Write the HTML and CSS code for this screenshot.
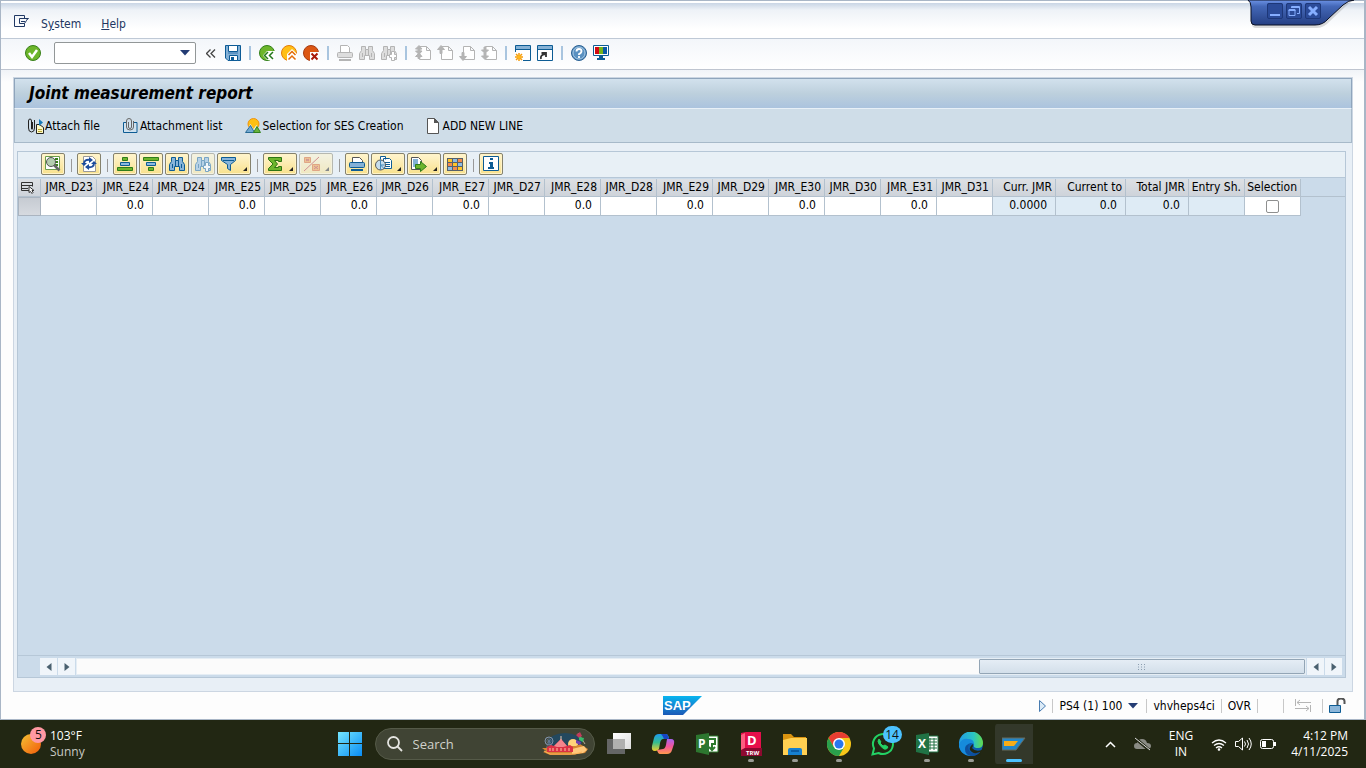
FILE: index.html
```html
<!DOCTYPE html>
<html lang="en">
	<head>
		<meta charset="UTF-8">
		<title>Joint measurement report</title>
		<link rel="stylesheet" href="styles.css">
	</head>
	<body>
		<!-- shared icon shapes -->
		<svg class="sprite" aria-hidden="true">
			<symbol id="i-binoc" viewBox="0 0 16 16"><path d="M2.500 1.500h4v3h3v-3h4v4l2 3v6h-5v-4h-5v4h-5v-6l2-3zM6.500 4.500v6M9.500 4.500v6M3.500 8v4M12.500 8v4"/></symbol>
			<symbol id="i-page" viewBox="0 0 16 16"><path d="M4.500 1.500h7l4 4v9h-11zM11.500 1.500v4h4"/></symbol>
			<symbol id="i-win" viewBox="0 0 16 16"><path d="M.5.5h15v15H.5z" fill="#fff" stroke="#0d5c94"/><path d="M1 1h14v3H1z" fill="#86b2d6"/><path d="M0 4h16v1H0z" fill="#0d5c94"/></symbol>
			<symbol id="i-sigma" viewBox="0 0 16 16"><path d="M1.500 1.500h13v4h-3v-1h-4l3 3.500-3 3.500h4v-1h3v4h-13v-2L6 8 1.500 3.500z" fill="#6db52d" stroke="#2d7513"/></symbol>
		</svg>

		<div class="sap">
			<div class="menubar">
				<button class="plain menu-icon" aria-label="Menu"><svg width="15" height="12" viewBox="0 0 15 12" fill="none" stroke="#203864"><path d="M10.500 3.500v-3H.5v11h10v-3M14.500 3.500h-9v5h5l2-3M7 6.500h4M12 5.500l2.500-2"/></svg></button>
				<a href="#">S<u>y</u>stem</a>
				<a href="#"><u>H</u>elp</a>
			</div>

			<div class="handle">
				<svg class="handle-bg" width="112" height="32" viewBox="0 0 112 32">
					<defs><linearGradient id="hg" x2="0" y2="1"><stop stop-color="#6d93e6"/><stop offset=".25" stop-color="#4468b8"/><stop offset="1" stop-color="#253f83"/></linearGradient></defs>
					<path d="M2 0q4 3 4 8v16q0 4 4 4h61q7 0 13-7l16-15q5-5 10-6z" fill="#999" opacity=".35"/>
					<path d="M2 0q3 2 3 7v14q0 4 4 4h60q8 0 13-6l15-14q6-5 11-5z" fill="url(#hg)" stroke="#0a1024"/>
				</svg>
				<div class="handle-buttons">
					<button aria-label="Minimize"><svg width="16" height="16"><path d="M3 11h10v2H3z" fill="#86aeff"/></svg></button>
					<button aria-label="Restore"><svg width="16" height="16" fill="none" stroke="#86aeff"><path d="M3 6.500h6v6H3zM2.500 7.500h7M5.500 5V3.500h8v7H11"/><path d="M6 4h7" stroke-width="2"/></svg></button>
					<button aria-label="Close"><svg width="16" height="16" stroke="#86aeff" stroke-width="3"><path d="M4 4l8 8M12 4l-8 8"/></svg></button>
				</div>
			</div>

			<div class="toolbar">
				<button class="tool" aria-label="Enter"><svg width="16" height="16"><circle cx="8" cy="8" r="7.500" fill="#6cb52a" stroke="#388019"/><path d="M4 8l3 4 5-7" fill="none" stroke="#fff" stroke-width="2.500"/></svg></button>
				<div class="command">
					<input type="text" aria-label="Command">
					<button class="plain" aria-label="Command history"><svg width="10" height="6"><path d="M0 0h10L5 5.500z" fill="#233c74"/></svg></button>
				</div>
				<button class="tool" aria-label="Collapse"><svg width="10" height="9" fill="none" stroke="#444" stroke-width="1.300"><path d="M4.500.5l-4 4 4 4M9 .5l-4 4 4 4"/></svg></button>
				<button class="tool" aria-label="Save"><svg width="16" height="16"><path d="M.5.500h15v15H3L.5 13z" fill="#84b1d6" stroke="#0c5b96"/><path d="M3.500.500h9v6h-9zM4.500 10.500h8v5h-8z" fill="#fff" stroke="#0c5b96"/><path d="M3 7h10v2H3z" fill="#5d94c3"/><path d="M6 12h3v3H6z" fill="#0c5b96"/></svg></button>
				<i class="sep"></i>
				<button class="tool" aria-label="Back"><svg width="16" height="16" viewBox="0 0 16 16"><circle cx="8" cy="8" r="7.500" fill="#6db52b" stroke="#328019"/><path d="M4 10.500L8 6h8v9H8z" fill="#fff"/><path d="M9 7l-3.500 3.500L9 14M14 7l-3.500 3.500L14 14" fill="none" stroke="#26771c" stroke-width="1.500"/></svg></button>
				<button class="tool" aria-label="Exit"><svg width="16" height="16" viewBox="0 0 16 16"><circle cx="8" cy="8" r="7.500" fill="#ffbf16" stroke="#e57b08"/><path d="M6 9l5-5 5 5v7H6z" fill="#fff"/><path d="M7.500 10L11 6.500l3.500 3.500M7.500 14.500L11 11l3.500 3.500" fill="none" stroke="#e36b09" stroke-width="1.500"/></svg></button>
				<button class="tool" aria-label="Cancel"><svg width="16" height="16" viewBox="0 0 16 16"><circle cx="8" cy="8" r="7.500" fill="#dc5713" stroke="#a63b12"/><path d="M7 7h9v9H7z" fill="#fff"/><path d="M8.500 8.500l6 6M14.500 8.500l-6 6" stroke="#a91908" stroke-width="2"/></svg></button>
				<i class="sep"></i>
				<button class="tool" disabled aria-label="Print"><svg width="16" height="16" fill="#ddd" stroke="#b4b4b4"><path d="M3.500 7.500v-7h7l2 2v5" fill="#fff"/><rect x=".5" y="7.500" width="15" height="5" rx="1"/><path d="M2 15h12" stroke-width="2"/></svg></button>
				<button class="tool" disabled aria-label="Find"><svg width="16" height="16" fill="#ddd" stroke="#b4b4b4"><use href="#i-binoc"/></svg></button>
				<button class="tool" disabled aria-label="Find next"><svg width="16" height="16" fill="#ddd" stroke="#b4b4b4"><use href="#i-binoc"/><path d="M10.500 6.500h3v3h2v3h-2v3h-3v-3h-2v-3h2z" fill="#fff"/></svg></button>
				<i class="sep"></i>
				<button class="tool" disabled aria-label="First page"><svg width="16" height="16" fill="#fff" stroke="#b4b4b4"><use href="#i-page"/><path d="M4 .5l3 3.500H5v2h2L4 9.500.500 6H3V4H.500zM4 8l3 3.500H5v2H3v-2H.500z" fill="#b4b4b4"/></svg></button>
				<button class="tool" disabled aria-label="Previous page"><svg width="16" height="16" fill="#fff" stroke="#b4b4b4"><use href="#i-page"/><path d="M4 .5l3.500 4H5v4H3v-4H.500z" fill="#b4b4b4"/></svg></button>
				<button class="tool" disabled aria-label="Next page"><svg width="16" height="16" fill="#fff" stroke="#b4b4b4"><use href="#i-page"/><path d="M4 15.500l3.500-4H5v-4H3v4H.500z" fill="#b4b4b4"/></svg></button>
				<button class="tool" disabled aria-label="Last page"><svg width="16" height="16" fill="#fff" stroke="#b4b4b4"><use href="#i-page"/><path d="M3 2h2v3h2.500L4 8.500.500 5H3zM3 8h2v3h2.500L4 14.500.500 11H3z" fill="#b4b4b4"/></svg></button>
				<i class="sep"></i>
				<button class="tool" aria-label="New session"><svg width="16" height="16"><use href="#i-win"/><path d="M0 7h8v9H0z" fill="#fff"/><path d="M4 8v8M0 12h8M1 9l6 6M7 9l-6 6" stroke="#f59a0c" stroke-width="1.500"/><circle cx="4" cy="12" r="2" fill="#ffb81c"/></svg></button>
				<button class="tool" aria-label="Create shortcut"><svg width="16" height="16"><use href="#i-win"/><path d="M4 14q-1-4 4-5M4.500 8H9v4" fill="none" stroke="#333" stroke-width="1.800"/></svg></button>
				<i class="sep"></i>
				<button class="tool" aria-label="Help"><svg width="16" height="16"><circle cx="8" cy="8" r="7.500" fill="#5a91c1" stroke="#2b6193"/><circle cx="8" cy="8" r="6" fill="none" stroke="#a7c8e3"/><path d="M5.500 6.500q0-2.500 2.500-2.500t2.500 2-2.500 3v1M8 11v2" fill="none" stroke="#fff" stroke-width="1.800"/></svg></button>
				<button class="tool" aria-label="Customize layout"><svg width="16" height="16"><path d="M.5.500h15v10H.500z" fill="#fff" stroke="#0d5c94"/><path d="M2 2h4v7H2z" fill="#d20a11"/><path d="M6 2h4v7H6z" fill="#76b51b"/><path d="M10 2h4v7h-4z" fill="#0b5aa5"/><path d="M6 11h4v2h2v2H4v-2h2z" fill="#0d5c94"/></svg></button>
			</div>

			<div class="content">
				<div class="panel">
					<h1>Joint measurement report</h1>
					<div class="actions">
						<button class="plain"><svg width="16" height="16" fill="none" stroke="#222"><path d="M4.500 4v6q0 2-1 1V3q0-2-1.500-2T.500 3v7q0 4 3 4t3-4V2"/><path d="M8.500 6.500h3l4 3v6h-7z" fill="#fff9c4"/><path d="M10 13.500h4M10 11.500h4" stroke="#b5a433"/><path d="M11 1l4 3.500-4 3.500z" fill="#167ab8" stroke="none"/></svg><span>Attach file</span></button>
						<button class="plain"><svg width="16" height="16" viewBox="0 0 16 16" fill="none"><path d="M3 4.500H.500v10h13.500v-10H11" stroke="#0d5c94" fill="#cfe2f0"/><path d="M5.500 4v5q0 1.500 1.500 1.500T8.500 9V3q0-2.500-2.500-2.500T3.500 3v6q0 3 3.500 3T10.500 9V3" stroke="#666"/></svg><span>Attachment list</span></button>
						<button class="plain"><svg width="16" height="16"><circle cx="8.500" cy="6" r="5.500" fill="#ffc013" stroke="#ef9310"/><path d="M0 15h16l-4.500-8-3 4-3-5z" fill="#e8f1f4"/><path d="M.500 14.500L5.500 7.500l4 7z" fill="#73a9d0" stroke="#276995"/><path d="M8.500 14.500l3.500-6 3.500 6z" fill="#69b33b" stroke="#32811d"/></svg><span>Selection for SES Creation</span></button>
						<button class="plain"><svg width="12" height="16"><path d="M.500.500h7l4 4v11H.500z" fill="#fff" stroke="#555"/><path d="M7 0l5 5H7z" fill="#555"/></svg><span class="wide">ADD NEW LINE</span></button>
					</div>

					<div class="grid">
						<div class="grid-tools">
							<button class="key" aria-label="Details"><svg width="16" height="16"><path d="M.500.500h14v13H.500z" fill="#fff" stroke="#6b9e4b"/><path d="M10 3h3M10 6h3M10 9h3" stroke="#388019" stroke-width="2"/><circle cx="6" cy="6" r="4.500" fill="#b5cdb0" stroke="#555"/><path d="M9 9l5.500 5.500" stroke="#666" stroke-width="2.500"/></svg></button>
							<i class="rule"></i>
							<button class="key" aria-label="Refresh"><svg width="16" height="16" fill="none"><path d="M2.500.500h9l3 3v12h-12z" fill="#fff" stroke="#999"/><path d="M3 8q0-5 6-4M13 7q0 5-6 4" stroke="#1d4c9c" stroke-width="2"/><path d="M8 1l4 3-4 3zM8 8l-4 3 4 3zM0 7h6l-3 3zM10 8h6l-3-3z" fill="#1d4c9c"/></svg></button>
							<i class="rule"></i>
							<button class="key" aria-label="Sort ascending"><svg width="16" height="16" fill="#6db52d" stroke="#2e7d1b"><path d="M5.500 1.500h5v3h-5zM.500 11.500h15v3H.500z"/><path d="M3.500 6.500h9v3h-9z" fill="#8abadf" stroke="#0d5c94"/></svg></button>
							<button class="key" aria-label="Sort descending"><svg width="16" height="16" fill="#6db52d" stroke="#2e7d1b"><path d="M.500 1.500h15v3H.500zM5.500 11.500h5v3h-5z"/><path d="M3.500 6.500h9v3h-9z" fill="#8abadf" stroke="#0d5c94"/></svg></button>
							<button class="key" aria-label="Find"><svg width="16" height="16" fill="#88b5da" stroke="#0d5c94"><use href="#i-binoc"/></svg></button>
							<button class="key" disabled aria-label="Find next"><svg width="16" height="16" fill="#88b5da" stroke="#0d5c94"><use href="#i-binoc"/><path d="M10.500 6.500h3v3h2v3h-2v3h-3v-3h-2v-3h2z" fill="#fff"/></svg></button>
							<button class="key split" aria-label="Filter"><svg width="16" height="16"><path d="M.500 1.500h14v3l-5 4v6l-3-2V8.500l-6-4z" fill="#88b5da" stroke="#0d5c94"/><path d="M2 4.500h11" stroke="#0d5c94"/></svg></button>
							<i class="rule"></i>
							<button class="key split" aria-label="Total"><svg width="16" height="16"><use href="#i-sigma"/></svg></button>
							<button class="key split" disabled aria-label="Subtotal"><svg width="18" height="16"><path d="M1.500 1.500h6v5h-6zM9.500 8.500h7v6h-7z" fill="#f39a34" stroke="#d95c19"/><path d="M3 3l3 2M6 3L3 5M11 10l4 3M15 10l-4 3M1 15L16 1" stroke="#b33"/></svg></button>
							<i class="rule"></i>
							<button class="key" aria-label="Print"><svg width="16" height="16"><path d="M3.500 7.500v-6h7l3 3v3" fill="#fff" stroke="#555"/><rect x=".5" y="6.500" width="15" height="5" rx="1" fill="#84b1d6" stroke="#0d5c94"/><path d="M2 14h12" stroke="#0d5c94" stroke-width="2"/></svg></button>
							<button class="key split" aria-label="Views"><svg width="18" height="16" fill="none"><path d="M5.500 3.500v-3h5v3M8.500 2.500h6l2 2v8h-8z" fill="#fff" stroke="#0d5c94"/><path d="M10 6.500h5M10 8.500h5M10 10.500h5" stroke="#0d5c94"/><circle cx="5.500" cy="9" r="5" fill="#c6dded" stroke="#555"/><path d="M5.500 4v10M5.500 9h4M5.500 9l3.500 3.500" stroke="#478abb"/></svg></button>
							<button class="key split" aria-label="Export"><svg width="16" height="16"><path d="M.500 1.500h7l3 3v9H.500z" fill="#fff" stroke="#555"/><path d="M2 3h5v8H2z" fill="#83b2d7"/><path d="M4.500 8.500h5v-3l6 5-6 5v-3h-5z" fill="#6db52d" stroke="#2e7d1b"/></svg></button>
							<button class="key" aria-label="Choose layout"><svg width="16" height="14"><path d="M0 1h16v13H0z" fill="#56606a"/><path d="M1 2h4v3H1zM6 6h4v3H6zM11 10h4v3h-4z" fill="#ffc527"/><path d="M6 2h4v3H6zM11 6h4v3h-4zM1 10h4v3H1z" fill="#8bbde4"/><path d="M11 2h4v3h-4zM1 6h4v3H1zM6 10h4v3H6z" fill="#f38c4a"/></svg></button>
							<i class="rule"></i>
							<button class="key" aria-label="Information"><svg width="16" height="16"><path d="M.500.500h15v14H.500z" fill="#fff" stroke="#0d5c94"/><path d="M7 2h3v2H7zM6 6h4v5h1v2H5v-2h2V8H6z" fill="#0d5c94"/></svg></button>
						</div>

						<table>
							<colgroup>
								<col class="c-sel"><col span="17" class="c-std"><col class="c-mid"><col class="c-cur"><col class="c-mid"><col span="2" class="c-std"><col>
							</colgroup>
							<thead>
								<tr>
									<th class="corner"><svg width="13" height="12" fill="none" stroke="#333"><path d="M8 8.500H.500v-8h11v4M1 3.500h10M1 6.500h6"/><path d="M8 4.500v6l1.500-1 1.500 2 1-1-1-2h2z" fill="#fff"/></svg></th>
									<th>JMR_D23</th><th>JMR_E24</th><th>JMR_D24</th><th>JMR_E25</th><th>JMR_D25</th><th>JMR_E26</th><th>JMR_D26</th><th>JMR_E27</th><th>JMR_D27</th><th>JMR_E28</th><th>JMR_D28</th><th>JMR_E29</th><th>JMR_D29</th><th>JMR_E30</th><th>JMR_D30</th><th>JMR_E31</th><th>JMR_D31</th>
									<th>Curr. JMR</th><th>Current to</th><th>Total JMR</th><th>Entry Sh.</th><th>Selection</th>
									<th class="rest"></th>
								</tr>
							</thead>
							<tbody>
								<tr>
									<td class="row-head"></td>
									<td></td><td>0.0</td><td></td><td>0.0</td><td></td><td>0.0</td><td></td><td>0.0</td><td></td><td>0.0</td><td></td><td>0.0</td><td></td><td>0.0</td><td></td><td>0.0</td><td></td>
									<td class="locked">0.0000</td><td class="locked">0.0</td><td class="locked">0.0</td><td class="locked"></td>
									<td class="check"><input type="checkbox" aria-label="Selection"></td>
									<td class="rest"></td>
								</tr>
							</tbody>
						</table>

						<div class="scroll">
							<button class="plain arrow" aria-label="Scroll left"><svg width="6" height="8"><path d="M5.500 0v8L.500 4z" fill="#49606f"/></svg></button>
							<button class="plain arrow" aria-label="Scroll right"><svg width="6" height="8"><path d="M.500 0v8l5-4z" fill="#49606f"/></svg></button>
							<div class="track"><div class="thumb"><svg width="8" height="6"><path d="M0 .5h8M0 3h8M0 5.500h8" stroke="#8b9daf" stroke-dasharray="1 2"/></svg></div></div>
							<button class="plain arrow" aria-label="Scroll left"><svg width="6" height="8"><path d="M5.500 0v8L.500 4z" fill="#49606f"/></svg></button>
							<button class="plain arrow" aria-label="Scroll right"><svg width="6" height="8"><path d="M.500 0v8l5-4z" fill="#49606f"/></svg></button>
						</div>
					</div>
				</div>
			</div>

			<div class="status">
				<svg class="logo" width="39" height="19" viewBox="0 0 39 19">
					<defs><linearGradient id="sg" x2="0" y2="1"><stop stop-color="#08b5ef"/><stop offset="1" stop-color="#1b59b7"/></linearGradient></defs>
					<path d="M0 0h39L20 19H0z" fill="url(#sg)"/>
					<text x="1" y="14" font-size="13" font-weight="bold" font-family="Liberation Sans, sans-serif" fill="#fff">SAP</text>
				</svg>
				<div class="status-info">
					<svg class="play" width="7" height="12"><path d="M.500.500v11l6-5.500z" fill="#dcebf7" stroke="#477bb0"/></svg>
					<button class="plain system">PS4 (1) 100<svg width="10" height="6"><path d="M0 0h10L5 5.500z" fill="#233c74"/></svg></button>
					<span class="server">vhvheps4ci</span>
					<span class="mode">OVR</span>
					<span class="transfer"><svg width="16" height="13" fill="none" stroke="#b5b5b5"><path d="M.500 0v7M2 3.500h14M5 1L2 3.500 5 6M0 9.500h14M11 7l3 2.500-3 2.500M15.500 6v7"/></svg></span>
					<svg width="17" height="16"><path d="M8.500 7V3q0-2.500 3.500-2.500T15.500 3v3" fill="none" stroke="#555" stroke-width="2"/><path d="M.500 7.500h11v7H.500z" fill="#8cb6d9" stroke="#0d5c94"/></svg>
				</div>
			</div>
		</div>

		<div class="taskbar">
			<div class="weather">
				<svg width="26" height="30" viewBox="0 0 26 30">
					<defs><linearGradient id="sun" x2="1" y2="1"><stop stop-color="#f4c235"/><stop offset="1" stop-color="#f25a09"/></linearGradient></defs>
					<circle cx="10" cy="18" r="10" fill="url(#sun)"/><circle cx="17" cy="9" r="8" fill="#ff98a3"/>
					<text x="14" y="13" font-size="12" fill="#111">5</text>
				</svg>
				<div><div>103°F</div><div class="dim">Sunny</div></div>
			</div>
			<div class="apps">
				<button class="app" aria-label="Start"><svg width="24" height="24"><defs><linearGradient id="st" gradientUnits="userSpaceOnUse" x1="0" y1="0" x2="24" y2="24"><stop stop-color="#74e6ff"/><stop offset="1" stop-color="#098cf4"/></linearGradient></defs><path d="M0 0h11v11H0zM12 0h12v11H12zM0 12h11v12H0zM12 12h12v12H12z" fill="url(#st)"/></svg></button>
				<div class="search">
					<svg width="16" height="16" fill="none" stroke="#e4e4e0" stroke-width="1.800"><circle cx="6.500" cy="6.500" r="5.500"/><path d="M10.500 10.500l4.500 4.500"/></svg>
					<input type="text" placeholder="Search" aria-label="Search">
					<svg width="46" height="26" viewBox="0 0 46 26">
						<ellipse cx="23" cy="11" rx="17" ry="9" fill="#174a70" opacity=".7"/>
						<circle cx="7" cy="10" r="4" fill="none" stroke="#8294aa"/><path d="M3 10h8M7 6v8M4 7l6 6M10 7l-6 6M7 10l-3 8M7 10l3 8" stroke="#687b93" stroke-width=".7"/>
						<circle cx="31" cy="13" r="5" fill="#ffd27b"/>
						<path d="M0 17h8l3-2h23l4-2 8 5-3 4-15 2H8l-7-3 3-1z" fill="#d48532"/><path d="M30 18l12-3 3 4-4 3-11 1z" fill="#ffc87b"/>
						<path d="M5 21v-5l4-2 3 1 7-7 6 7 3-1 3 2v5z" fill="#dc3144"/><path d="M12 15l7-7 6 7-4 1h-6z" fill="#f4858c"/><path d="M19 5v4" stroke="#e9c9b0"/>
						<path d="M8 17v3M11 17v3M15 17v3M19 17v3M23 17v3M27 17v3" stroke="#ffc8a1"/>
						<path d="M36 2l7 11" stroke="#b7a698"/><path d="M34 4l4-3 2 4-3 2z" fill="#c23b5d"/><path d="M37 6l5 1-1 4-4-2z" fill="#37b76a"/><path d="M34 9l5 2-1 3-4-2z" fill="#733faf"/><path d="M2 20l6 3h25l7-2" stroke="#ffb45b" fill="none"/>
					</svg>
				</div>
				<button class="app" aria-label="Task view"><svg width="24" height="24"><defs><linearGradient id="tv" x2="1" y2="1"><stop stop-color="#fff"/><stop offset="1" stop-color="#ddd"/></linearGradient></defs><path d="M0 7h18v15H0z" fill="#656666"/><path d="M6 1h18v16H6z" fill="url(#tv)"/><path d="M6 7h12v10H6z" fill="#b0b0af"/></svg></button>
				<button class="app" aria-label="Copilot"><svg width="24" height="24" viewBox="0 0 24 24"><defs><linearGradient id="ca" x2="0" y2="1"><stop stop-color="#1d9af0"/><stop offset=".5" stop-color="#35bd8e"/><stop offset="1" stop-color="#f0ce2c"/></linearGradient><linearGradient id="cb" x2="0" y2="1"><stop stop-color="#a862ef"/><stop offset=".5" stop-color="#f3559b"/><stop offset="1" stop-color="#ff9a4c"/></linearGradient></defs><path d="M8 2h7q2 0 3 4l-6 1q-2 0-3 4l-1 6q-1 2-4 2-4 0-3-5l2-8q1-4 5-4z" fill="url(#ca)"/><path d="M12 2h3q2 0 3 5h-5q-1-3-3-5z" fill="#1745c5"/><path d="M16 22H9q-2 0-3-4l6-1q2 0 3-4l1-6h4q4 0 3 5l-2 6q-1 4-5 4z" fill="url(#cb)"/></svg></button>
				<button class="app" aria-label="Project"><svg width="24" height="24"><path d="M12 4h11v16H12z" fill="#fff" stroke="#2c7a2d"/><path d="M14 7h6v5h-3v5M14 15l3 3 3-3" fill="none" stroke="#2c7a2d" stroke-width="2"/><path d="M1 3l13-2v22L1 20z" fill="#2d762f"/><text x="3" y="16" font-size="12" font-weight="bold" fill="#fff">P</text></svg></button>
				<button class="app open" aria-label="DWG TrueView"><svg width="24" height="24"><path d="M2 1l5-1h15v24H2z" fill="#e60f4b"/><path d="M2 3l4-2v15l-4 3z" fill="#ff5d80"/><path d="M2 18l4-2h17v8H2z" fill="#8c092f"/><text x="8" y="13" font-size="13" font-weight="bold" fill="#fff">D</text><text x="7" y="23" font-size="6" font-weight="bold" fill="#fff">TRW</text></svg></button>
				<button class="app open" aria-label="File Explorer"><svg width="24" height="24"><path d="M0 2h8l3 3h12v10H0z" fill="#d99310"/><path d="M0 8l8-2h16v17H0z" fill="#ffd052"/><path d="M5 23v-5q0-2 2-2h10q2 0 2 2v5z" fill="#1680cf"/><path d="M8 19h8" stroke="#0a5ca4" stroke-width="2"/></svg></button>
				<button class="app open" aria-label="Chrome"><svg width="24" height="24" viewBox="0 0 24 24"><circle cx="12" cy="12" r="12" fill="#f8c719"/><path d="M1.600 6A12 12 0 0 1 22.400 6H12L6.800 15z" fill="#e83d32"/><path d="M1.600 6A12 12 0 0 0 12 24l5.200-9H6.800z" fill="#2a9f4c"/><circle cx="12" cy="12" r="6" fill="#fff"/><circle cx="12" cy="12" r="4.500" fill="#2877ef"/></svg></button>
				<button class="app" aria-label="WhatsApp"><svg width="24" height="24" fill="none" stroke="#23d265"><path d="M1.500 22.500l1.500-6a10 10 0 1 1 4.500 4.500z" stroke-width="2"/><path d="M8 7q-2 2 0 5t5 5q3 1 4-2l-3-2-2 1-3-3 1-1z" fill="#23d265"/></svg><span class="badge">14</span></button>
				<button class="app open" aria-label="Excel"><svg width="24" height="24"><path d="M12 4h11v16H12z" fill="#fff" stroke="#207245"/><path d="M15 6v12M19 6v12M14 7h8M14 10h8M14 13h8M14 16h8" stroke="#207245"/><path d="M1 3l13-2v22L1 20z" fill="#207245"/><text x="3" y="16" font-size="12" font-weight="bold" fill="#fff">X</text></svg></button>
				<button class="app open" aria-label="Edge"><svg width="24" height="24" viewBox="0 0 24 24"><defs><linearGradient id="ea"><stop stop-color="#229de5"/><stop offset=".6" stop-color="#2ac3c4"/><stop offset="1" stop-color="#63dc4b"/></linearGradient></defs><circle cx="12" cy="12" r="12" fill="#0c5daf"/><path d="M0 12A12 12 0 0 1 24 11q0 5-5 5-5 0-4-3 0-3-4-3Q3 10 0 16z" fill="url(#ea)"/><path d="M0 12q3-6 9-5 6 0 6 5-5-3-7 2-2 6 4 10Q0 23 0 12z" fill="#168bdc"/><path d="M10 12q-3 6 3 9 5 1 9-2-3 5-10 5-6-1-6-7 0-4 4-5z" fill="#0d509e"/><path d="M14 12q0 3-1 4 3 4 10 2l1-2v8h-2l-1-4q-7 3-10-2-1-3 3-6z" fill="#222713"/></svg></button>
				<button class="app active" aria-label="SAP Logon"><svg width="24" height="14"><path d="M0 1h23L14 13H0z" fill="#2386c8" stroke="#666a5c"/><path d="M2 4h14l-4 5H2z" fill="#f8ad18"/></svg></button>
			</div>
			<div class="tray">
				<button class="plain" aria-label="Hidden icons"><svg width="11" height="7" fill="none" stroke="#fff" stroke-width="1.500"><path d="M1 6l4.500-4.500L10 6"/></svg></button>
				<svg class="cloud" width="17" height="14"><path d="M3 12q-3 0-3-3t3-3q1-4 5-4t5 4q4 0 4 3t-4 3z" fill="#8a8b84"/><path d="M1 1l14 12" stroke="#222713" stroke-width="3"/><path d="M1 1l15 12" stroke="#ddd"/></svg>
				<div class="lang"><div>ENG</div><div>IN</div></div>
				<svg width="16" height="13" fill="none" stroke="#fff" stroke-width="1.300"><path d="M1 5q7-6 14 0M3 7.500q5-4 10 0M5 10q3-2.500 6 0"/><circle cx="8" cy="11.500" r=".7" fill="#fff"/></svg>
				<svg width="17" height="14" fill="none" stroke="#fff"><path d="M.500 4.500h3l4-3.500v12l-4-3.500h-3zM9.500 4.500q2 2.500 0 5M12 3q3 4 0 8M14 1q4.500 6 0 12"/></svg>
				<svg width="16" height="12" fill="none" stroke="#fff"><rect x=".5" y="1.500" width="13" height="9" rx="2"/><path d="M2 3h4v6H2z" fill="#fff" stroke="none"/><path d="M15 4v4" stroke-width="2"/></svg>
				<div class="clock"><div>4:12 PM</div><div>4/11/2025</div></div>
			</div>
		</div>
	</body>
</html>
```
FILE: styles.css
```css
* {
	box-sizing: border-box;
}
body {
	margin: 0;
	height: 100vh;
	display: flex;
	flex-direction: column;
	overflow: hidden;
	font-family: "DejaVu Sans Condensed", "Noto Sans", sans-serif;
	font-size: 12px;
	line-height: 16px;
	color: #000;
}
svg {
	display: block;
	flex: none;
}
.sprite {
	position: absolute;
	width: 0;
	height: 0;
}
button {
	font: inherit;
	color: inherit;
	padding: 0;
	margin: 0;
}
.plain {
	border: 0;
	background: none;
}

/* application window */
.sap {
	flex: 1;
	min-height: 0;
	display: flex;
	flex-direction: column;
	position: relative;
	border: 1px solid #a9b6c6;
	border-width: 1px 2px 1px 1px;
	background: #fdfdfd;
}
.menubar {
	height: 38px;
	flex: none;
	display: flex;
	align-items: center;
	gap: 20px;
	padding: 7px 13px 0;
	border-top: 2px solid #fff;
	border-bottom: 1px solid #bfc9d6;
	background: linear-gradient(#c9d5e5, #eef2f7 20%, #fff 75%);
}
.menu-icon {
	margin: 0 -8px 6px 0;
}
.menubar a {
	color: #233761;
	text-decoration: none;
}
.handle {
	position: absolute;
	top: -1px;
	right: 6px;
	width: 112px;
	height: 32px;
}
.handle-bg {
	position: absolute;
}
.handle-buttons {
	position: relative;
	display: flex;
	gap: 3px;
	padding: 3px 0 0 21px;
}
.handle-buttons button {
	width: 16px;
	height: 16px;
	border: 0;
	border-radius: 2px;
	background: #2b4b99;
	outline: 1px solid #1d3778;
	outline-offset: -1px;
}
.toolbar {
	height: 31px;
	flex: none;
	display: flex;
	align-items: center;
	padding: 0 0 2px 21px;
	border-bottom: 1px solid #bfc5d0;
	background: linear-gradient(#f3f6fa, #fff);
}
.tool {
	width: 22px;
	height: 22px;
	border: 0;
	background: none;
	display: flex;
	align-items: center;
	justify-content: center;
}
.command {
	display: flex;
	align-items: center;
	width: 142px;
	height: 22px;
	margin: 0 4px 0 10px;
	border: 1px solid #929798;
	border-radius: 2px;
	background: #fff;
}
.command input {
	flex: 1;
	min-width: 0;
	border: 0;
	outline: 0;
	background: none;
}
.command button {
	width: 20px;
}
.command svg {
	margin: 0 auto;
}
.sep {
	width: 12px;
	height: 14px;
	background: linear-gradient(#a9c5df, #a9c5df) center / 2px 100% no-repeat;
}

.content {
	flex: 1;
	min-height: 0;
	display: flex;
	padding: 7px 11px 0 12px;
	background: linear-gradient(#f0f3f7, #fdfdfd 12px);
}
.panel {
	flex: 1;
	min-width: 0;
	display: flex;
	flex-direction: column;
	border: 1px solid #ccd6e2;
	background: #e8eff6;
}
.panel h1 {
	margin: 0;
	height: 31px;
	padding: 4px 14px;
	font-size: 17px;
	line-height: 20px;
	font-style: italic;
	border: 1px solid #8fa5bc;
	border-bottom-color: #e8f0f7;
	background: linear-gradient(#d2e1ed, #bdd0dd 50%, #abc3de);
}
.actions {
	height: 34px;
	flex: none;
	display: flex;
	align-items: center;
	gap: 23px;
	padding: 0 13px;
	border: 1px solid #a7b9c9;
	border-top: 0;
	background: #cfdde8;
}
.actions button {
	display: flex;
	align-items: center;
	gap: 1px;
}
.actions .wide {
	margin-left: 3px;
}

/* grid */
.grid {
	flex: 1;
	display: flex;
	flex-direction: column;
	margin: 8px 6px 13px 3px;
	border: 1px solid #b6c7d7;
	background: #cbdbea;
}
.grid-tools {
	display: flex;
	gap: 2px;
	height: 26px;
	padding: 1px 0 0 23px;
	border-bottom: 1px solid #b6c7d7;
	background: #e8f0f6;
}
.key {
	width: 24px;
	height: 22px;
	display: flex;
	align-items: center;
	padding-left: 3px;
	border: 1px solid #85826d;
	border-radius: 2px;
	background: linear-gradient(#fff5cf, #f8e18d);
	box-shadow: inset 0 0 0 1px #fff3c7;
}
.key:disabled {
	opacity: .5;
}
.split {
	width: 34px;
	justify-content: space-between;
}
.split::after {
	content: "";
	align-self: flex-end;
	margin: 0 3px 3px 0;
	border: 2px solid #222;
	border-top-color: transparent;
	border-left-color: transparent;
}
.rule {
	width: 8px;
	background: linear-gradient(#999, #999) center / 1px 13px no-repeat;
}
table {
	table-layout: fixed;
	width: 100%;
	margin-top: 1px;
	border-collapse: separate;
	border-spacing: 0;
}
.c-sel { width: 23px; }
.c-std { width: 56px; }
.c-mid { width: 63px; }
.c-cur { width: 70px; }
th, td {
	padding: 0 3px 0 0;
	text-align: right;
	white-space: nowrap;
	border: 1px solid #b3c1ce;
	border-width: 0 1px 1px 0;
}
th {
	height: 18px;
	font-weight: normal;
	line-height: 17px;
	background: linear-gradient(#dde0e4, #ced3da);
}
td {
	height: 19px;
	padding-right: 8px;
	line-height: 16px;
	vertical-align: top;
	background: #fff;
}
.corner svg {
	margin: 0 auto;
}
.row-head {
	border: 1px solid #aab4c0;
	background: linear-gradient(#c6cbd2, #d6dae0);
}
.locked {
	background: #deebf5;
}
.check {
	text-align: center;
	padding: 0;
}
.check input {
	appearance: none;
	width: 13px;
	height: 13px;
	margin: 3px 0 0;
	border: 1px solid #8e8f8f;
	border-radius: 2px;
	background: #fff;
	display: inline-block;
	vertical-align: top;
}
.rest {
	background: none;
	border-right: 0;
}
td.rest {
	border: 0;
}
.scroll {
	display: flex;
	gap: 1px;
	margin-top: auto;
	height: 22px;
	padding: 2px 3px 2px 22px;
	border-top: 1px solid #b6c7d7;
}
.arrow {
	width: 17px;
	display: flex;
	align-items: center;
	justify-content: center;
	background: #f0f5fa;
}
.track {
	flex: 1;
	display: flex;
	justify-content: flex-end;
	border: 1px solid #e5edf4;
	background: #fbfbfb;
}
.thumb {
	width: 326px;
	display: flex;
	align-items: center;
	justify-content: center;
	border: 1px solid #93a5b5;
	border-radius: 1px;
	background: linear-gradient(#e5edf5, #d3dfea);
}

.status {
	height: 27px;
	flex: none;
	display: grid;
	grid-template-columns: 1fr auto 1fr;
	align-items: center;
	padding: 0 18px;
}
.logo {
	grid-column: 2;
}
.status-info {
	display: flex;
	align-items: center;
	justify-content: flex-end;
}
.status-info > * + * {
	margin-left: 6px;
}
.status-info button, .status-info span {
	height: 14px;
	line-height: 14px;
	padding-left: 6px;
	border-left: 1px solid #c8c8c8;
}
.system {
	display: flex;
	align-items: center;
	gap: 6px;
}
.status-info .server {
	margin-left: 8px;
}
.status-info .mode {
	padding-right: 6px;
	border-right: 1px solid #c8c8c8;
}
.status-info .transfer {
	margin-left: 25px;
	padding: 0 11px;
	border-right: 1px solid #c8c8c8;
}

/* taskbar */
.taskbar {
	height: 48px;
	flex: none;
	display: grid;
	grid-template-columns: 1fr auto 1fr;
	align-items: center;
	padding-right: 2px;
	background: #222713;
	color: #fff;
	font-family: "Open Sans", "Noto Sans", sans-serif;
}
.weather {
	display: flex;
	align-items: center;
	gap: 3px;
	padding-left: 21px;
}
.weather svg {
	margin-bottom: 6px;
}
.dim {
	color: #c9cac4;
}
.apps {
	display: flex;
	align-items: center;
}
.app {
	position: relative;
	width: 44px;
	height: 40px;
	border: 0;
	border-radius: 4px;
	background: none;
	display: flex;
	align-items: center;
	justify-content: center;
}
.open::after, .active::after {
	content: "";
	position: absolute;
	bottom: 2px;
	width: 6px;
	height: 3px;
	border-radius: 2px;
	background: #999b94;
}
.active {
	background: #33382a;
	background-clip: content-box;
	padding: 0 4px 0 2px;
}
.active::after {
	width: 16px;
	background: #4cc2ff;
}
.badge {
	position: absolute;
	top: 2px;
	left: 22px;
	width: 19px;
	height: 17px;
	border-radius: 9px;
	background: #4cc2ff;
	color: #111;
	line-height: 17px;
}
.search {
	display: flex;
	align-items: center;
	width: 220px;
	height: 32px;
	margin: 0 2px 0 3px;
	padding: 0 6px 0 11px;
	border: 1px solid #555a48;
	border-radius: 16px;
	background: #404434;
}
.search input {
	flex: 1;
	min-width: 0;
	margin-left: 8px;
	padding: 0 2px;
	border: 0;
	outline: 0;
	background: none;
	font: inherit;
	font-size: 13px;
}
.search input::placeholder {
	color: #d0d1cb;
}
.tray {
	display: flex;
	align-items: center;
	justify-content: flex-end;
	gap: 8px;
	padding-right: 16px;
}
.cloud {
	margin-left: 10px;
}
.lang {
	margin: 0 10px;
	text-align: center;
}
.clock {
	margin-left: 7px;
	text-align: right;
}
```
